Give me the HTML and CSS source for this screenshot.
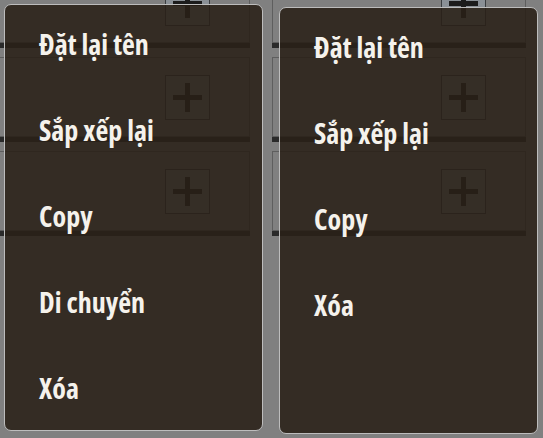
FILE: index.html
```html
<!DOCTYPE html>
<html lang="vi">
<head>
  <meta charset="UTF-8">
  <meta name="viewport" content="width=device-width, initial-scale=1.0">
  <title>Menu</title>
  <link rel="stylesheet" href="styles.css">
</head>
<body>
  <!-- Danh sách phía sau -->
  <div class="lists">
    <div class="list">
      <div class="row"><div class="card"><span class="add"></span></div><div class="bar"></div></div>
      <div class="row"><div class="card"><span class="add"></span></div><div class="bar"></div></div>
      <div class="row"><div class="card"><span class="add"></span></div><div class="bar"></div></div>
    </div>
    <div class="list">
      <div class="row"><div class="card"><span class="add"></span></div><div class="bar"></div></div>
      <div class="row"><div class="card"><span class="add"></span></div><div class="bar"></div></div>
      <div class="row"><div class="card"><span class="add"></span></div><div class="bar"></div></div>
    </div>
  </div>

  <!-- Menu ngữ cảnh -->
  <div class="menu menu-left">
    <div class="item">Đặt lại tên</div>
    <div class="item">Sắp xếp lại</div>
    <div class="item">Copy</div>
    <div class="item">Di chuyển</div>
    <div class="item">Xóa</div>
  </div>

  <div class="menu menu-right">
    <div class="item">Đặt lại tên</div>
    <div class="item">Sắp xếp lại</div>
    <div class="item">Copy</div>
    <div class="item">Xóa</div>
  </div>
</body>
</html>
```

FILE: styles.css
```css
body {
  margin: 0;
  padding: 0;
  width: 543px;
  height: 438px;
  background: #808080;
  overflow: hidden;
  position: relative;
  font-family: 'Open Sans', 'Noto Sans', sans-serif;
}

/* Danh sách phía sau */
.lists {
  display: flex;
  gap: 22px;
  margin-left: -4px;
  margin-top: -37px;
}

.list {
  width: 254px;
}

.row {
  padding-bottom: 9px;
}

.card {
  height: 78px;
  border: 1px solid #5e5e5e;
  display: flex;
  align-items: center;
  justify-content: flex-end;
  padding-right: 39px;
}

.add {
  width: 43px;
  height: 43px;
  border: 1px solid #3a3d40;
  background: #8a9096;
  position: relative;
}

.add::before,
.add::after {
  content: '';
  position: absolute;
  background: #1c1c1c;
}

.add::before {
  left: 7px;
  right: 7px;
  top: 19px;
  height: 5px;
}

.add::after {
  top: 7px;
  bottom: 7px;
  left: 19px;
  width: 5px;
}

.bar {
  height: 5px;
  background: #2a2a2a;
}

/* Menu ngữ cảnh */
.menu {
  position: absolute;
  width: 257px;
  height: 425px;
  background: rgba(41, 32, 23, 0.88);
  border: 1px solid #bdbdbd;
  border-radius: 7px;
}

.menu-left {
  left: 4px;
  top: 4px;
}

.menu-right {
  left: 279px;
  top: 7px;
}

.item {
  box-sizing: border-box;
  height: 86px;
  padding-top: 20px;
  padding-left: 34px;
  font-size: 28px;
  line-height: 38px;
  font-weight: 700;
  font-stretch: 75%;
  color: #f5f2ec;
}
```
